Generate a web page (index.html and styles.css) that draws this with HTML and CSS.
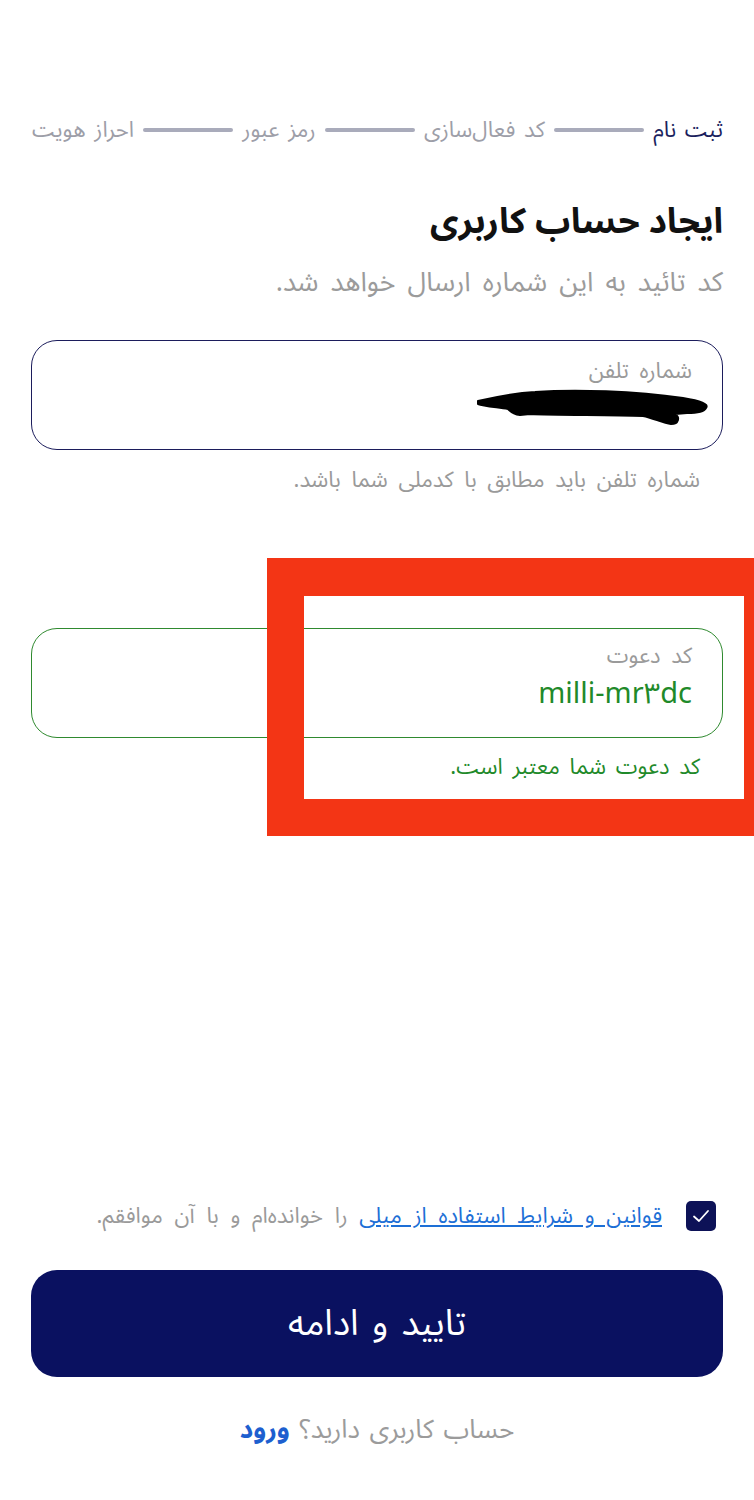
FILE: index.html
```html
<!DOCTYPE html>
<html lang="fa" dir="rtl">
<head>
<meta charset="utf-8">
<title>ایجاد حساب کاربری</title>
<link rel="stylesheet" href="styles.css">
</head>
<body>
<main class="page">
  <nav class="stepper">
    <span class="step active">ثبت نام</span>
    <span class="step-line"></span>
    <span class="step">کد فعال‌سازی</span>
    <span class="step-line"></span>
    <span class="step">رمز عبور</span>
    <span class="step-line"></span>
    <span class="step">احراز هویت</span>
  </nav>

  <h1 class="title">ایجاد حساب کاربری</h1>
  <p class="subtitle">کد تائید به این شماره ارسال خواهد شد.</p>

  <div class="field field-phone">
    <div class="field-label">شماره تلفن</div>
    <div class="field-value">
      <svg class="redact" width="234" height="40" viewBox="0 0 234 40">
        <path d="M3 14 C20 10 40 6 60 5 C100 2 160 4 208 11 C226 14 234 17 231 21 C229 25 220 26 212 26 L200 27 C205 30 204 37 196 37 C188 36 178 31 168 29 C130 28 80 28 55 27 L45 28 C38 27 35 24 33 22 C20 20 8 19 3 17 Z" fill="#000" stroke="#000" stroke-width="2" stroke-linejoin="round"/>
      </svg>
    </div>
  </div>
  <p class="helper">شماره تلفن باید مطابق با کدملی شما باشد.</p>

  <section class="invite">
    <div class="field field-invite">
      <div class="field-label">کد دعوت</div>
      <div class="field-value invite-value">milli-mr۳dc</div>
    </div>
    <p class="helper helper-ok">کد دعوت شما معتبر است.</p>
    <div class="highlight"></div>
  </section>

  <label class="terms">
    <span class="checkbox">
      <svg width="20" height="16" viewBox="0 0 20 16"><path d="M3 8.5 L8 13 L17 3" fill="none" stroke="#fff" stroke-width="1.8" stroke-linecap="round" stroke-linejoin="round"/></svg>
    </span>
    <span class="terms-text"><a class="link" href="#">قوانین و شرایط استفاده از میلی</a> را خوانده‌ام و با آن موافقم.</span>
  </label>

  <button class="primary">تایید و ادامه</button>

  <p class="login">حساب کاربری دارید؟ <a class="login-link" href="#">ورود</a></p>
</main>
</body>
</html>
```

FILE: styles.css
```css
html, body {
  margin: 0;
  padding: 0;
  background: #ffffff;
}

body {
  font-family: "Noto Sans Arabic", "Vazirmatn", "DejaVu Sans", sans-serif;
  direction: rtl;
  color: #111;
}

.page {
  padding: 115px 31px 40px;
  display: flex;
  flex-direction: column;
}

.stepper {
  display: flex;
  align-items: center;
  gap: 9px;
  height: 30px;
  padding-left: 1px;
}

.step {
  font-size: 22px;
  line-height: 30px;
  word-spacing: 3px;
  color: #9d9ea8;
  white-space: nowrap;
}

.step.active {
  color: #1b1f5e;
}

.step-line {
  flex: 1;
  height: 4px;
  border-radius: 2px;
  background: #a9abbb;
}

.title {
  margin: 54px 0 0;
  font-size: 35px;
  line-height: 46px;
  font-weight: 700;
  color: #111;
}

.subtitle {
  margin: 21px 0 0;
  font-size: 27px;
  line-height: 34px;
  word-spacing: 5px;
  color: #9b9b9b;
}

.field {
  box-sizing: border-box;
  height: 110px;
  border-radius: 26px;
  padding: 15px 30px 0;
  display: flex;
  flex-direction: column;
  align-items: flex-start;
}

.field-phone {
  margin-top: 40px;
  border: 1.5px solid #1c1d5c;
}

.field-label {
  font-size: 22px;
  line-height: 30px;
  word-spacing: 5px;
  color: #9a9a9a;
}

.field-value {
  margin-top: 1px;
  display: flex;
}

.redact {
  display: block;
  margin-right: -17px;
}

.helper {
  margin: 15px 0 0;
  padding-right: 23px;
  font-size: 22px;
  line-height: 30px;
  word-spacing: 5px;
  color: #9a9a9a;
}

.invite {
  position: relative;
  margin-top: 133px;
}

.field-invite {
  padding-top: 12px;
  border: 1.2px solid #2f8a2f;
}

.invite-value {
  margin-top: 5px;
  font-size: 29px;
  line-height: 36px;
  color: #1f8a2a;
  direction: ltr;
}

.helper-ok {
  margin-top: 14px;
  color: #1f8a2a;
  word-spacing: 4px;
}

.highlight {
  position: absolute;
  top: -70px;
  left: 236px;
  right: -31px;
  height: 278px;
  box-sizing: border-box;
  border-style: solid;
  border-color: #f33515;
  border-width: 38px 10px 37px 37px;
  pointer-events: none;
}

.terms {
  margin-top: 418px;
  display: flex;
  align-items: center;
  gap: 24px;
  padding-right: 7px;
}

.checkbox {
  width: 30px;
  height: 30px;
  border-radius: 5px;
  background: #0d1257;
  display: flex;
  align-items: center;
  justify-content: center;
  flex: none;
}

.checkbox svg {
  display: block;
}

.terms-text {
  font-size: 22px;
  line-height: 32px;
  word-spacing: 6px;
  color: #9a9a9a;
}

.link {
  color: #1d6fd6;
  text-decoration: underline;
}

.primary {
  margin-top: 38px;
  height: 107px;
  border: none;
  border-radius: 26px;
  background: #0a1160;
  color: #fff;
  font-family: inherit;
  font-size: 36px;
  word-spacing: 4px;
  cursor: pointer;
}

.login {
  margin: 36px 0 0;
  text-align: center;
  font-size: 26px;
  line-height: 34px;
  word-spacing: 3px;
  color: #9b9b9b;
}

.login-link {
  color: #1d5fcf;
  font-weight: 700;
  text-decoration: none;
}
```
